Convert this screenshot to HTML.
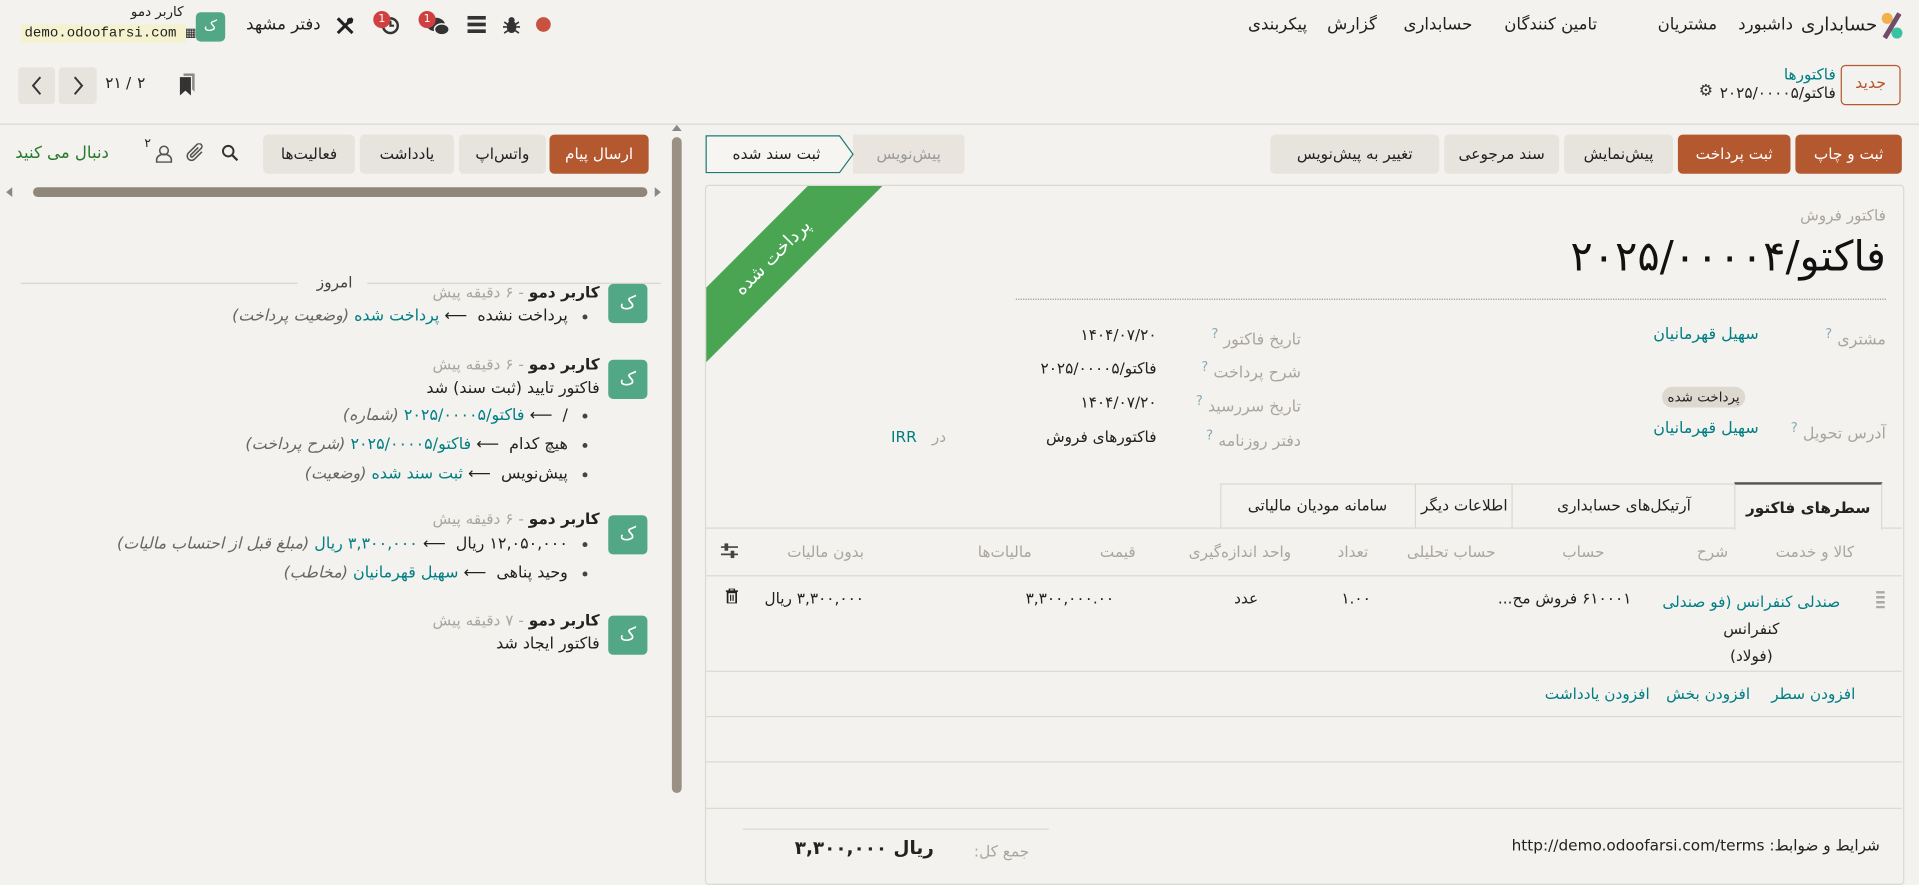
<!DOCTYPE html>
<html><head><meta charset="utf-8">
<style>
html,body{margin:0;padding:0;width:1919px;height:878px;overflow:hidden;background:#f3f2ef;}
#w{position:absolute;left:0;top:0;width:1568px;height:717px;transform:scale(1.22385);transform-origin:0 0;font-family:"DejaVu Sans","Liberation Sans",sans-serif;color:#222;font-size:12.5px;}
.a{position:absolute;white-space:nowrap;direction:rtl;}
.l{position:absolute;white-space:nowrap;}
.btn{position:absolute;height:32px;line-height:32px;text-align:center;border-radius:4px;background:#e7e3dd;color:#222;font-size:12.5px;direction:rtl;}
.pr{background:#b4582f;color:#fff;}
.teal{color:#017e84;}
.g{color:#aaa69e;}
.hl{position:absolute;height:1px;background:#dcd9d3;}
.av{position:absolute;width:32px;height:32px;border-radius:4px;background:#52a787;color:#fff;text-align:center;line-height:30px;font-size:15px;}
.dot{display:inline-block;width:4px;height:4px;border-radius:50%;background:#444;margin-left:12px;vertical-align:middle;}
.it{font-style:italic;color:#666;}
.badge{position:absolute;width:14px;height:14px;border-radius:50%;background:#d04040;color:#fff;font-size:9px;text-align:center;line-height:14px;}
</style></head><body><div id="w">

<!-- top nav -->
<svg class="l" style="left:1536px;top:10px" width="20" height="22" viewBox="0 0 20 22"><circle cx="6" cy="5" r="4.5" fill="#f0b04a"/><circle cx="14" cy="17" r="4.5" fill="#37c2a0"/><path d="M16 1 L4 21" stroke="#714b67" stroke-width="4"/></svg>
<div class="a" style="right:34px;top:11px;font-size:15px">حسابداری</div>
<div class="a" style="right:103px;top:12px;font-size:13.5px">داشبورد</div>
<div class="a" style="right:165px;top:12px;font-size:13.5px">مشتریان</div>
<div class="a" style="right:263px;top:12px;font-size:13.5px">تامین کنندگان</div>
<div class="a" style="right:365px;top:12px;font-size:13.5px">حسابداری</div>
<div class="a" style="right:443px;top:12px;font-size:13.5px">گزارش</div>
<div class="a" style="right:500px;top:12px;font-size:13.5px">پیکربندی</div>

<div class="l" style="left:438px;top:14px;width:12px;height:12px;border-radius:50%;background:#c8523f"></div>
<svg class="l" style="left:411px;top:13px" width="14" height="15" viewBox="0 0 14 15"><ellipse cx="7" cy="9" rx="4" ry="5" fill="#333"/><circle cx="7" cy="3.5" r="2.5" fill="#333"/><path d="M1 5l3 2M13 5l-3 2M0 9h3M11 9h3M1 14l3-2M13 14l-3-2" stroke="#333" stroke-width="1.4"/></svg>
<svg class="l" style="left:382px;top:13px" width="15" height="14"><rect x="0" y="0" width="15" height="3" fill="#333"/><rect x="0" y="5.5" width="15" height="3" fill="#333"/><rect x="0" y="11" width="15" height="3" fill="#333"/></svg>
<svg class="l" style="left:348px;top:13px" width="20" height="17" viewBox="0 0 20 17"><ellipse cx="8" cy="7" rx="7.5" ry="5.5" fill="#333"/><ellipse cx="13" cy="11" rx="6" ry="4.5" fill="#333" stroke="#f3f2ef" stroke-width="1.2"/></svg>
<div class="badge" style="left:342px;top:9px">1</div>
<svg class="l" style="left:311px;top:13px" width="16" height="16"><circle cx="8" cy="8" r="6" fill="none" stroke="#333" stroke-width="2"/><path d="M8 4v4h3" stroke="#333" stroke-width="1.8" fill="none"/></svg>
<div class="badge" style="left:305px;top:9px">1</div>
<svg class="l" style="left:274px;top:13px" width="16" height="16" viewBox="0 0 16 16"><path d="M2 2l12 12M14 2L2 14" stroke="#222" stroke-width="2.5"/><circle cx="12" cy="4" r="2.5" fill="#222"/></svg>
<div class="a" style="right:1306px;top:12px;font-size:13.5px">دفتر مشهد</div>
<div class="av" style="left:160px;top:10px;width:24px;height:24px;line-height:22px;font-size:12px">ک</div>
<div class="a" style="right:1418px;top:3px;font-size:11px">کاربر دمو</div>
<div class="l" style="left:17px;top:20px;width:135px;height:15px;background:#f5f2d0;font-family:'Liberation Mono',monospace;font-size:11.5px;line-height:15px;padding-left:3px;box-sizing:border-box">demo.odoofarsi.com <span style="font-size:10px">&#9638;</span></div>

<!-- breadcrumb -->
<div class="l" style="left:1504px;top:53px;width:47px;height:31px;border:1px solid #b4582f;border-radius:4px;color:#b4582f;text-align:center;line-height:30px;font-size:13px">جدید</div>
<div class="a teal" style="right:68px;top:53px;font-size:12.5px">فاکتورها</div>
<div class="a" style="right:68px;top:68px;font-size:12.5px">فاکتو/۲۰۲۵/۰۰۰۰۵</div>
<div class="l" style="left:1388px;top:67px;font-size:13px;color:#333">&#9881;</div>

<div class="l" style="left:15px;top:55px;width:30px;height:30px;background:#e7e3dd;border-radius:3px"></div>
<svg class="l" style="left:25px;top:62px" width="10" height="16"><path d="M8 1L2 8l6 7" fill="none" stroke="#333" stroke-width="1.6"/></svg>
<div class="l" style="left:48px;top:55px;width:31px;height:30px;background:#e7e3dd;border-radius:3px"></div>
<svg class="l" style="left:59px;top:62px" width="10" height="16"><path d="M2 1l6 7-6 7" fill="none" stroke="#333" stroke-width="1.6"/></svg>
<div class="l" style="left:86px;top:60px;font-size:12.5px">۲۱</div>
<div class="l" style="left:103px;top:60px;font-size:12.5px">/</div>
<div class="l" style="left:112px;top:60px;font-size:12.5px">۲</div>
<svg class="l" style="left:146px;top:60px" width="14" height="18"><path d="M4 0h9v15l-2-2V2H4z" fill="#888"/><path d="M1 3h9v15l-4.5-4L1 18z" fill="#333"/></svg>

<div class="hl" style="left:0;top:101px;width:1568px"></div>

<!-- action buttons -->
<div class="btn pr" style="left:1467px;top:110px;width:87px">ثبت و چاپ</div>
<div class="btn pr" style="left:1371px;top:110px;width:92px">ثبت پرداخت</div>
<div class="btn" style="left:1278px;top:110px;width:89px">پیش‌نمایش</div>
<div class="btn" style="left:1180px;top:110px;width:94px">سند مرجوعی</div>
<div class="btn" style="left:1038px;top:110px;width:138px">تغییر به پیش‌نویس</div>

<div class="l" style="left:697px;top:110px;width:91px;height:32px;background:#e9e5de;border-radius:0 3px 3px 0;color:#999;text-align:center;line-height:32px">پیش‌نویس</div>
<svg class="l" style="left:576px;top:110px" width="126" height="32"><path d="M1 1H110L121 16L110 31H1Z" fill="#f6f5f2" stroke="#1f7a76" stroke-width="1"/></svg>
<div class="l" style="left:577px;top:110px;width:115px;text-align:center;line-height:32px;direction:rtl">ثبت سند شده</div>

<!-- chatter -->
<div class="btn pr" style="left:449px;top:110px;width:81px">ارسال پیام</div>
<div class="btn" style="left:375px;top:110px;width:71px">واتس‌اپ</div>
<div class="btn" style="left:294px;top:110px;width:77px">یادداشت</div>
<div class="btn" style="left:215px;top:110px;width:75px">فعالیت‌ها</div>
<svg class="l" style="left:181px;top:118px" width="14" height="14"><circle cx="5.5" cy="5.5" r="4.3" fill="none" stroke="#333" stroke-width="1.6"/><path d="M8.7 8.7L13 13" stroke="#333" stroke-width="1.8"/></svg>
<svg class="l" style="left:152px;top:117px" width="16" height="16" viewBox="0 0 16 16"><path d="M13 7L7 13a3.5 3.5 0 0 1-5-5l7-7a2.3 2.3 0 0 1 3.3 3.3L5.5 11a1 1 0 0 1-1.5-1.5L10 3.5" fill="none" stroke="#555" stroke-width="1.3"/></svg>
<svg class="l" style="left:127px;top:118px" width="14" height="15"><circle cx="7" cy="5" r="3.5" fill="none" stroke="#555" stroke-width="1.3"/><path d="M1 14.5v-2a4 3 0 0 1 12 0v2z" fill="none" stroke="#555" stroke-width="1.3"/></svg>
<div class="l" style="left:118px;top:112px;font-size:10px">۲</div>
<div class="a" style="right:1479px;top:117px;color:#257a2c;font-size:13.5px">دنبال می کنید</div>

<div class="l" style="left:5px;top:153px;width:0;height:0;border-top:4px solid transparent;border-bottom:4px solid transparent;border-right:5px solid #888"></div>
<div class="l" style="left:535px;top:153px;width:0;height:0;border-top:4px solid transparent;border-bottom:4px solid transparent;border-left:5px solid #888"></div>
<div class="l" style="left:27px;top:153px;width:502px;height:8px;border-radius:4px;background:#8f877c"></div>
<div class="l" style="left:549px;top:102px;width:0;height:0;border-left:4px solid transparent;border-right:4px solid transparent;border-bottom:5px solid #888"></div>
<div class="l" style="left:549px;top:112px;width:8px;height:536px;border-radius:4px;background:#9a9184"></div>

<div class="hl" style="left:17px;top:231px;width:226px;background:#d8d5cf"></div>
<div class="hl" style="left:300px;top:231px;width:240px;background:#d8d5cf"></div>
<div class="a" style="right:1280px;top:223px;font-size:12.5px;color:#444">امروز</div>

<div class="av" style="left:497px;top:232px">ک</div>
<div class="a" style="right:1078px;top:231px"><b>کاربر دمو</b><span class="g"> - ۶ دقیقه پیش</span></div>
<div class="a" style="right:1088px;top:251px;font-size:13px"><span class="dot"></span>پرداخت نشده &nbsp;⟵ <span class="teal">پرداخت شده</span> <span class="it">(وضعیت پرداخت)</span></div>

<div class="av" style="left:497px;top:294px">ک</div>
<div class="a" style="right:1078px;top:290px"><b>کاربر دمو</b><span class="g"> - ۶ دقیقه پیش</span></div>
<div class="a" style="right:1078px;top:310px;font-size:13px">فاکتور تایید (ثبت سند) شد</div>
<div class="a" style="right:1088px;top:332px;font-size:13px"><span class="dot"></span>/ &nbsp;⟵ <span class="teal">فاکتو/۲۰۲۵/۰۰۰۰۵</span> <span class="it">(شماره)</span></div>
<div class="a" style="right:1088px;top:356px;font-size:13px"><span class="dot"></span>هیچ کدام &nbsp;⟵ <span class="teal">فاکتو/۲۰۲۵/۰۰۰۰۵</span> <span class="it">(شرح پرداخت)</span></div>
<div class="a" style="right:1088px;top:380px;font-size:13px"><span class="dot"></span>پیش‌نویس &nbsp;⟵ <span class="teal">ثبت سند شده</span> <span class="it">(وضعیت)</span></div>

<div class="av" style="left:497px;top:421px">ک</div>
<div class="a" style="right:1078px;top:416px"><b>کاربر دمو</b><span class="g"> - ۶ دقیقه پیش</span></div>
<div class="a" style="right:1088px;top:437px;font-size:13px"><span class="dot"></span>۱۲,۰۵۰,۰۰۰ ریال &nbsp;⟵ <span class="teal">۳,۳۰۰,۰۰۰ ریال</span> <span class="it">(مبلغ قبل از احتساب مالیات)</span></div>
<div class="a" style="right:1088px;top:461px;font-size:13px"><span class="dot"></span>وحید پناهی &nbsp;⟵ <span class="teal">سهیل قهرمانیان</span> <span class="it">(مخاطب)</span></div>

<div class="av" style="left:497px;top:503px">ک</div>
<div class="a" style="right:1078px;top:499px"><b>کاربر دمو</b><span class="g"> - ۷ دقیقه پیش</span></div>
<div class="a" style="right:1078px;top:519px;font-size:13px">فاکتور ایجاد شد</div>

<!-- sheet -->
<div class="l" style="left:576px;top:151px;width:978px;height:570px;border:1px solid #dcd9d3;border-radius:3px;background:#f3f2ef"></div>
<svg class="l" style="left:577px;top:152px" width="150" height="150"><polygon points="83,0 144,0 0,144 0,83" fill="#4aa553"/></svg>
<div class="l" style="left:581px;top:201px;width:100px;text-align:center;color:#fff;font-size:15px;transform:rotate(-45deg);direction:rtl">پرداخت شده</div>

<div class="a g" style="right:27px;top:168px;font-size:12.5px">فاکتور فروش</div>
<div class="a" style="right:27px;top:188px;font-size:34px;line-height:44px;color:#111">فاکتو/۲۰۲۵/۰۰۰۰۴</div>
<div class="l" style="left:830px;top:244px;width:711px;border-top:1px dotted #999"></div>

<div class="a g" style="right:27px;top:266px;font-size:13px">مشتری <sup style="color:#8ab">?</sup></div>
<div class="a teal" style="right:131px;top:266px;font-size:13px">سهیل قهرمانیان</div>
<div class="l" style="left:1358px;top:316px;width:68px;height:17px;border-radius:9px;background:#ddd8d0;font-size:11px;text-align:center;line-height:17px">پرداخت شده</div>
<div class="a g" style="right:27px;top:343px;font-size:13px">آدرس تحویل <sup style="color:#8ab">?</sup></div>
<div class="a teal" style="right:131px;top:343px;font-size:13px">سهیل قهرمانیان</div>

<div class="a g" style="right:505px;top:266px;font-size:13px">تاریخ فاکتور <sup style="color:#8ab">?</sup></div>
<div class="a g" style="right:505px;top:293px;font-size:13px">شرح پرداخت <sup style="color:#8ab">?</sup></div>
<div class="a g" style="right:505px;top:321px;font-size:13px">تاریخ سررسید <sup style="color:#8ab">?</sup></div>
<div class="a g" style="right:505px;top:349px;font-size:13px">دفتر روزنامه <sup style="color:#8ab">?</sup></div>
<div class="a" style="right:623px;top:266px">۱۴۰۴/۰۷/۲۰</div>
<div class="a" style="right:623px;top:293px">فاکتو/۲۰۲۵/۰۰۰۰۵</div>
<div class="a" style="right:623px;top:321px">۱۴۰۴/۰۷/۲۰</div>
<div class="a" style="right:623px;top:349px">فاکتورهای فروش</div>
<div class="a g" style="right:795px;top:349px">در</div>
<div class="l teal" style="left:728px;top:349px">IRR</div>

<!-- tabs -->
<div class="hl" style="left:577px;top:431px;width:977px"></div>
<div class="l" style="left:997px;top:395px;width:540px;height:36px;border-top:1px solid #dcd9d3;border-left:1px solid #dcd9d3"></div>
<div class="l" style="left:1417px;top:394px;width:119px;height:37px;border-top:2px solid #555;border-left:1px solid #dcd9d3;border-right:1px solid #dcd9d3;background:#f3f2ef;text-align:center;line-height:37px;font-weight:bold;direction:rtl">سطرهای فاکتور</div>
<div class="l" style="left:1235px;top:395px;width:182px;text-align:center;line-height:36px;border-left:1px solid #dcd9d3;height:36px;direction:rtl">آرتیکل‌های حسابداری</div>
<div class="l" style="left:1156px;top:395px;width:79px;text-align:center;line-height:36px;border-left:1px solid #dcd9d3;height:36px;direction:rtl">اطلاعات دیگر</div>
<div class="l" style="left:997px;top:395px;width:159px;text-align:center;line-height:36px;height:36px;direction:rtl">سامانه مودیان مالیاتی</div>

<!-- table -->
<div class="a g" style="right:53px;top:443px">کالا و خدمت</div>
<div class="a g" style="right:156px;top:443px">شرح</div>
<div class="a g" style="right:257px;top:443px">حساب</div>
<div class="a g" style="right:346px;top:443px">حساب تحلیلی</div>
<div class="a g" style="right:450px;top:443px">تعداد</div>
<div class="a g" style="right:513px;top:443px">واحد اندازه‌گیری</div>
<div class="a g" style="right:640px;top:443px">قیمت</div>
<div class="a g" style="right:725px;top:443px">مالیات‌ها</div>
<div class="a g" style="right:862px;top:443px">بدون مالیات</div>
<svg class="l" style="left:589px;top:443px" width="14" height="14"><path d="M0 4h14M0 10h14" stroke="#444" stroke-width="1.4"/><rect x="3" y="1" width="3" height="6" fill="#444"/><rect x="8" y="7" width="3" height="6" fill="#444"/></svg>
<div class="hl" style="left:577px;top:470px;width:977px"></div>

<div class="l" style="left:1533px;top:483px;width:7px;height:14px;background:repeating-linear-gradient(#aaa 0 2px,transparent 2px 4px);"></div>
<div class="a teal" style="right:52px;top:481px;line-height:22px;text-align:center;width:170px;white-space:normal">صندلی کنفرانس (فو صندلی<br><span style="color:#222">کنفرانس<br>(فولاد)</span></div>
<div class="a" style="right:235px;top:481px">۶۱۰۰۰۱ فروش مح...</div>
<div class="l" style="left:1096px;top:481px">۱.۰۰</div>
<div class="a" style="right:540px;top:481px">عدد</div>
<div class="l" style="left:838px;top:481px">۳,۳۰۰,۰۰۰.۰۰</div>
<div class="a" style="right:862px;top:481px">۳,۳۰۰,۰۰۰ ریال</div>
<svg class="l" style="left:593px;top:481px" width="10" height="12"><path d="M0 2h10M3 2V0h4v2" stroke="#222" stroke-width="1.2" fill="none"/><rect x="1.5" y="3" width="7" height="9" fill="none" stroke="#222" stroke-width="1.4"/><path d="M4 5v5M6 5v5" stroke="#222"/></svg>
<div class="hl" style="left:577px;top:548px;width:977px"></div>
<div class="a teal" style="right:52px;top:559px">افزودن سطر</div>
<div class="a teal" style="right:138px;top:559px">افزودن بخش</div>
<div class="a teal" style="right:220px;top:559px">افزودن یادداشت</div>
<div class="hl" style="left:577px;top:585px;width:977px"></div>
<div class="hl" style="left:577px;top:622px;width:977px"></div>
<div class="hl" style="left:577px;top:660px;width:977px"></div>

<div class="a" style="right:32px;top:683px">شرایط و ضوابط: http://demo.odoofarsi.com/terms</div>
<div class="hl" style="left:607px;top:677px;width:250px"></div>
<div class="a g" style="right:727px;top:688px">جمع کل:</div>
<div class="a" style="right:805px;top:684px;font-weight:bold;font-size:15px">ریال ۳,۳۰۰,۰۰۰</div>

</div></body></html>
